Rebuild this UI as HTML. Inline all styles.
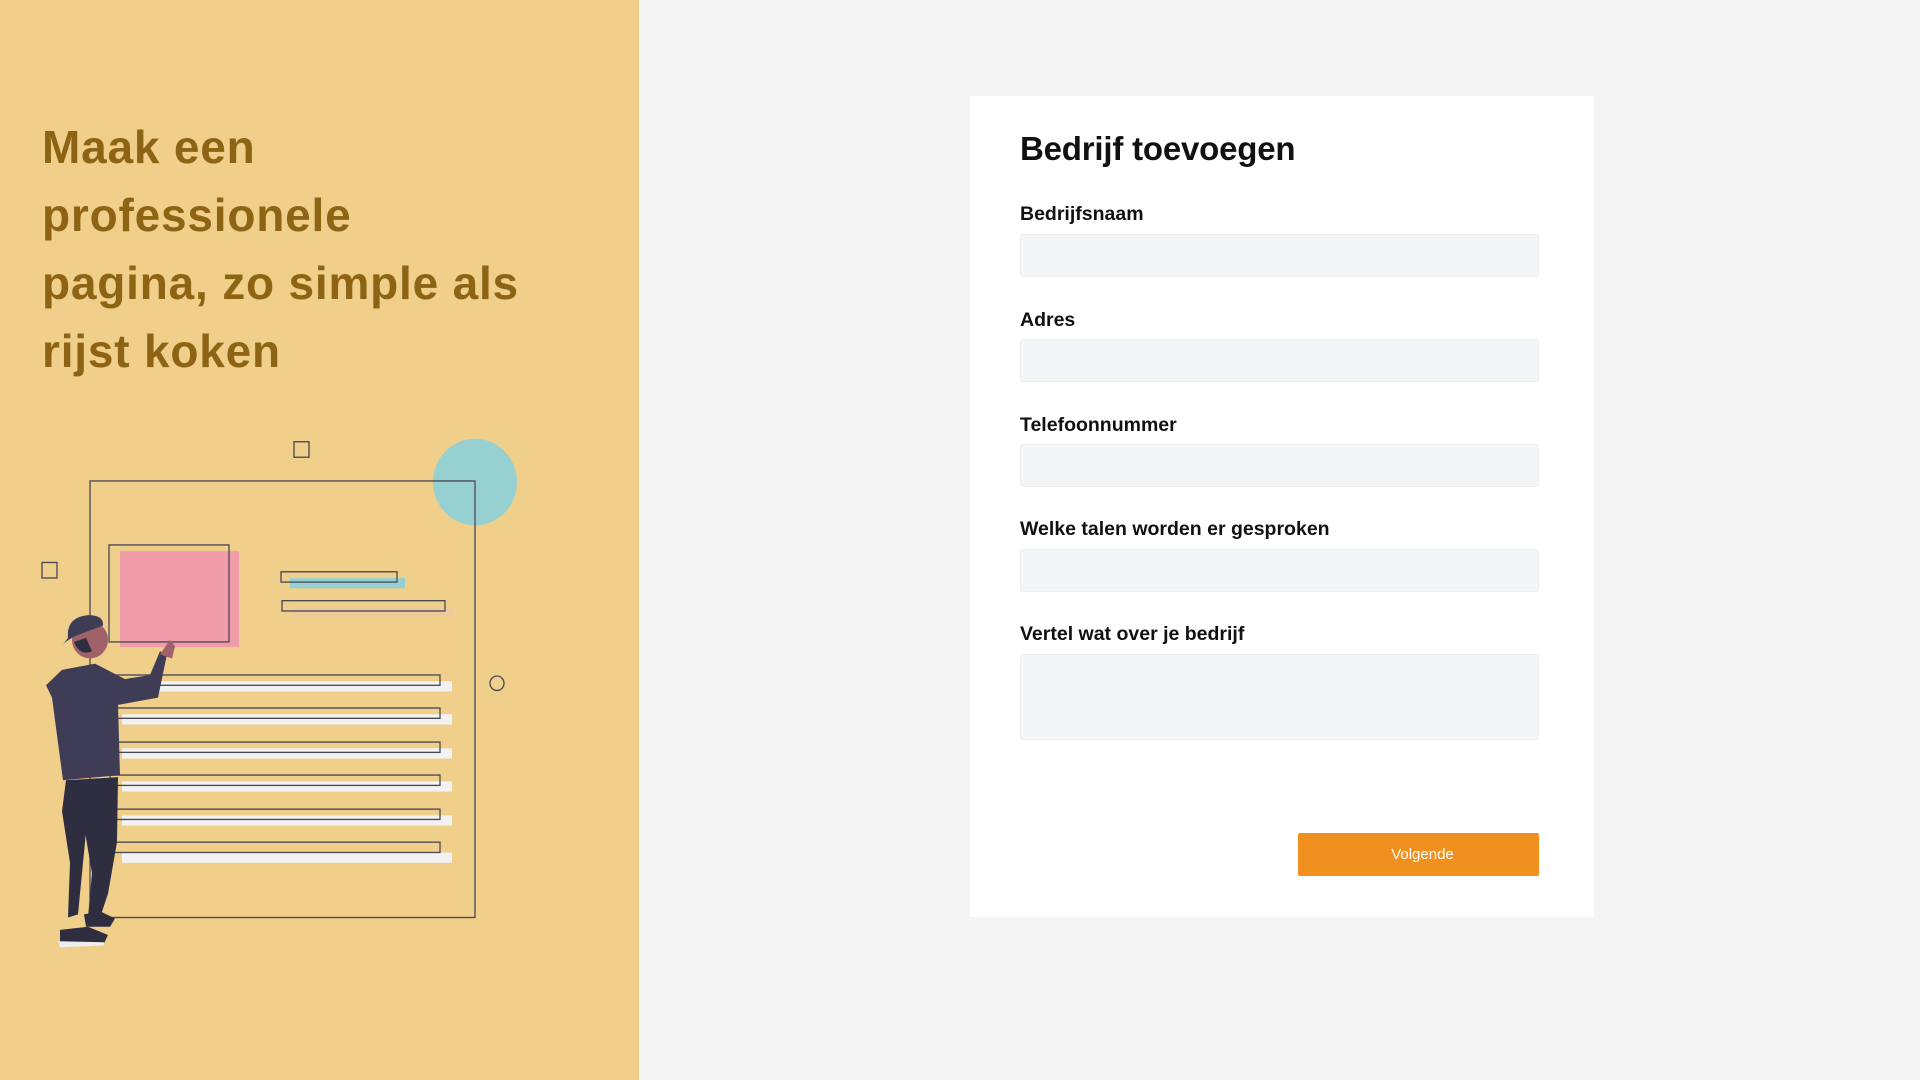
<!DOCTYPE html>
<html><head><meta charset="utf-8"><style>
*{margin:0;padding:0;box-sizing:border-box}
body{width:1920px;height:1080px;background:#f4f4f4;font-family:"Liberation Sans",sans-serif;position:relative;overflow:hidden}
.left{position:absolute;left:0;top:0;width:639px;height:1080px;background:#f0cf8b}
.title{position:absolute;left:42px;top:113px;font-weight:bold;font-size:46px;line-height:68px;color:#8c6414;letter-spacing:0.8px}
.card{position:absolute;left:970px;top:96px;width:624px;height:821px;background:#fff}
h1{position:absolute;left:1020px;top:130px;font-size:33px;font-weight:bold;color:#111;letter-spacing:-0.2px}
.lbl{position:absolute;left:1020px;font-size:19.5px;font-weight:bold;color:#111}
.in{position:absolute;left:1020px;width:519px;height:43px;background:#f4f5f7;border:1px solid #eceef0;border-radius:3px}
.btn{position:absolute;left:1298px;top:833px;width:241px;height:43px;background:#f0901f;border-radius:2px;color:#fff;font-size:15px;text-align:center;line-height:43px;padding-left:8px}
</style></head><body>
<div class="left">
<div class="title">Maak een<br>professionele<br>pagina, zo simple als<br>rijst koken</div>
<svg width="639" height="1080" style="position:absolute;left:0;top:0">
<g transform="translate(0,-14.4) scale(1,1.032)">
<circle cx="475" cy="481" r="42" fill="#97d0d1"/>
<rect x="90" y="480" width="385" height="423" fill="none" stroke="#4a4858" stroke-width="1.3"/>
<rect x="294" y="442" width="15" height="15" fill="none" stroke="#4a4858" stroke-width="1.3"/>
<rect x="42" y="559" width="15" height="15" fill="none" stroke="#4a4858" stroke-width="1.3"/>
<circle cx="497" cy="676" r="7" fill="none" stroke="#4a4858" stroke-width="1.3"/>
<rect x="120" y="548" width="119" height="93" fill="#f19ca9"/>
<rect x="109" y="542" width="120" height="94" fill="none" stroke="#4a4858" stroke-width="1.3"/>
<rect x="290" y="574" width="115" height="10" fill="#97d0d1"/>
<rect x="281" y="568" width="116" height="10" fill="none" stroke="#4a4858" stroke-width="1.3"/>
<rect x="292" y="602" width="162" height="9" fill="#f0c99a"/>
<rect x="282" y="596" width="163" height="10" fill="none" stroke="#4a4858" stroke-width="1.3"/>
<g>
<rect x="122" y="674" width="330" height="10" fill="#f2f2f2"/><rect x="110" y="668" width="330" height="10" fill="none" stroke="#4a4858" stroke-width="1.3"/>
<rect x="122" y="706" width="330" height="10" fill="#f2f2f2"/><rect x="110" y="700" width="330" height="10" fill="none" stroke="#4a4858" stroke-width="1.3"/>
<rect x="122" y="739" width="330" height="10" fill="#f2f2f2"/><rect x="110" y="733" width="330" height="10" fill="none" stroke="#4a4858" stroke-width="1.3"/>
<rect x="122" y="771" width="330" height="10" fill="#f2f2f2"/><rect x="110" y="765" width="330" height="10" fill="none" stroke="#4a4858" stroke-width="1.3"/>
<rect x="122" y="804" width="330" height="10" fill="#f2f2f2"/><rect x="110" y="798" width="330" height="10" fill="none" stroke="#4a4858" stroke-width="1.3"/>
<rect x="122" y="840" width="330" height="10" fill="#f2f2f2"/><rect x="110" y="830" width="330" height="10" fill="none" stroke="#4a4858" stroke-width="1.3"/>
</g>
<path d="M66 770 L118 767 L117 830 L108 880 L100 903 L88 903 L92 860 L85 820 Z" fill="#2f2e41"/>
<path d="M66 770 L90 770 L85 830 L78 900 L68 903 L70 850 L62 800 Z" fill="#2f2e41"/>
<path d="M60 915 L88 912 L108 920 L104 928 L60 930 Z" fill="#2f2e41"/>
<path d="M84 900 L100 897 L115 904 L110 912 L86 912 Z" fill="#2f2e41"/>
<path d="M58 926 L104 927 L104 930 L60 932 Z" fill="#eee"/>
<path d="M62 663 L95 657 L125 672 L150 668 L160 645 L167 648 L158 690 L118 697 L120 765 L63 770 L52 690 L46 678 Z" fill="#3f3d56"/>
<path d="M160 648 L170 634 L175 640 L172 652 Z" fill="#a0616a"/>
<circle cx="90" cy="634" r="18" fill="#a0616a"/>
<path d="M68 632 Q66 612 88 610 Q104 610 103 620 L76 630 Q64 636 62 640 Z" fill="#3f3d56"/>
<path d="M74 636 Q80 650 92 645 L86 632 Z" fill="#2f2e41"/>
</g>
</svg>
</div>
<div class="card"></div>
<h1>Bedrijf toevoegen</h1>
<div class="lbl" style="top:203px">Bedrijfsnaam</div>
<div class="in" style="top:234px"></div>
<div class="lbl" style="top:309px">Adres</div>
<div class="in" style="top:339px"></div>
<div class="lbl" style="top:414px">Telefoonnummer</div>
<div class="in" style="top:444px"></div>
<div class="lbl" style="top:518px">Welke talen worden er gesproken</div>
<div class="in" style="top:549px"></div>
<div class="lbl" style="top:623px">Vertel wat over je bedrijf</div>
<div class="in" style="top:654px;height:86px"></div>
<div class="btn">Volgende</div>
</body></html>
